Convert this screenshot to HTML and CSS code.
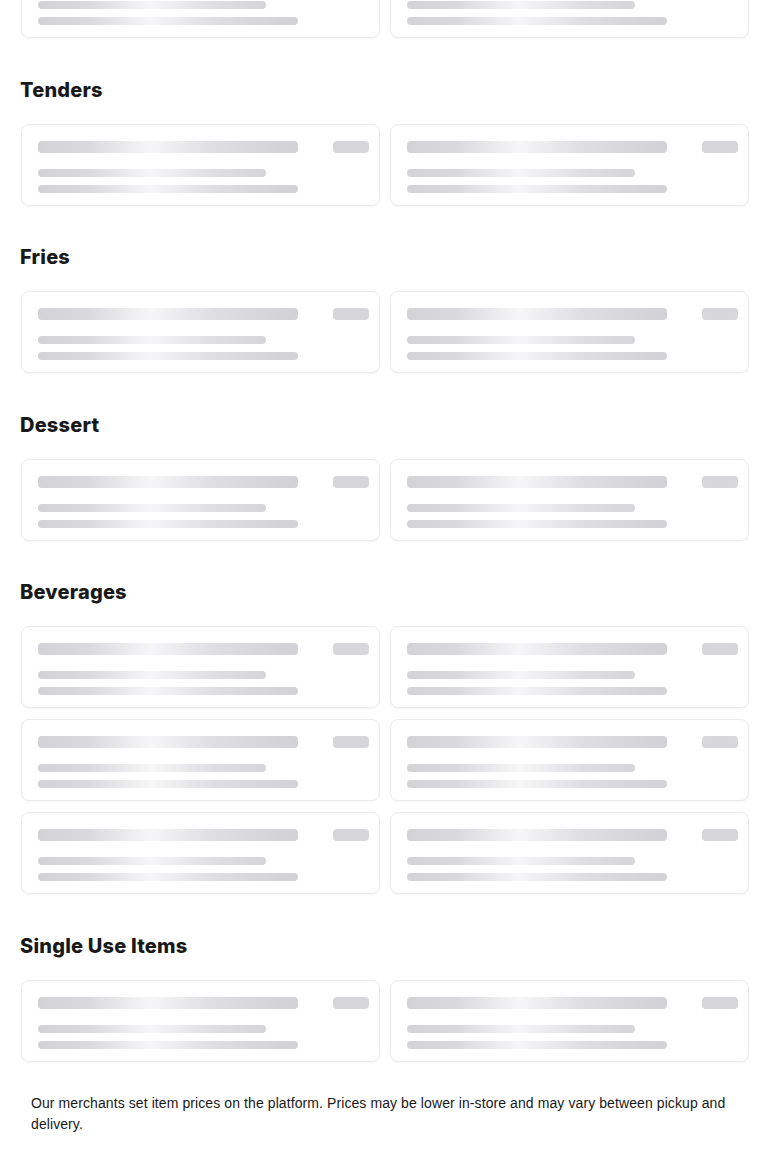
FILE: index.html
```html
<!DOCTYPE html>
<html lang="en">
<head>
<meta charset="utf-8">
<title>Menu</title>
<link rel="stylesheet" href="styles.css">
</head>
<body>
<main class="menu">
  <section class="section section-first">
    <div class="grid">
      <div class="card"><div class="row"><span class="bar bar-title"></span><span class="bar bar-price"></span></div><span class="bar bar-line1"></span><span class="bar bar-line2"></span></div>
      <div class="card"><div class="row"><span class="bar bar-title"></span><span class="bar bar-price"></span></div><span class="bar bar-line1"></span><span class="bar bar-line2"></span></div>
    </div>
  </section>

  <section class="section">
    <h2 class="heading">Tenders</h2>
    <div class="grid">
      <div class="card"><div class="row"><span class="bar bar-title"></span><span class="bar bar-price"></span></div><span class="bar bar-line1"></span><span class="bar bar-line2"></span></div>
      <div class="card"><div class="row"><span class="bar bar-title"></span><span class="bar bar-price"></span></div><span class="bar bar-line1"></span><span class="bar bar-line2"></span></div>
    </div>
  </section>

  <section class="section">
    <h2 class="heading">Fries</h2>
    <div class="grid">
      <div class="card"><div class="row"><span class="bar bar-title"></span><span class="bar bar-price"></span></div><span class="bar bar-line1"></span><span class="bar bar-line2"></span></div>
      <div class="card"><div class="row"><span class="bar bar-title"></span><span class="bar bar-price"></span></div><span class="bar bar-line1"></span><span class="bar bar-line2"></span></div>
    </div>
  </section>

  <section class="section">
    <h2 class="heading">Dessert</h2>
    <div class="grid">
      <div class="card"><div class="row"><span class="bar bar-title"></span><span class="bar bar-price"></span></div><span class="bar bar-line1"></span><span class="bar bar-line2"></span></div>
      <div class="card"><div class="row"><span class="bar bar-title"></span><span class="bar bar-price"></span></div><span class="bar bar-line1"></span><span class="bar bar-line2"></span></div>
    </div>
  </section>

  <section class="section">
    <h2 class="heading">Beverages</h2>
    <div class="grid">
      <div class="card"><div class="row"><span class="bar bar-title"></span><span class="bar bar-price"></span></div><span class="bar bar-line1"></span><span class="bar bar-line2"></span></div>
      <div class="card"><div class="row"><span class="bar bar-title"></span><span class="bar bar-price"></span></div><span class="bar bar-line1"></span><span class="bar bar-line2"></span></div>
      <div class="card"><div class="row"><span class="bar bar-title"></span><span class="bar bar-price"></span></div><span class="bar bar-line1"></span><span class="bar bar-line2"></span></div>
      <div class="card"><div class="row"><span class="bar bar-title"></span><span class="bar bar-price"></span></div><span class="bar bar-line1"></span><span class="bar bar-line2"></span></div>
      <div class="card"><div class="row"><span class="bar bar-title"></span><span class="bar bar-price"></span></div><span class="bar bar-line1"></span><span class="bar bar-line2"></span></div>
      <div class="card"><div class="row"><span class="bar bar-title"></span><span class="bar bar-price"></span></div><span class="bar bar-line1"></span><span class="bar bar-line2"></span></div>
    </div>
  </section>

  <section class="section">
    <h2 class="heading">Single Use Items</h2>
    <div class="grid">
      <div class="card"><div class="row"><span class="bar bar-title"></span><span class="bar bar-price"></span></div><span class="bar bar-line1"></span><span class="bar bar-line2"></span></div>
      <div class="card"><div class="row"><span class="bar bar-title"></span><span class="bar bar-price"></span></div><span class="bar bar-line1"></span><span class="bar bar-line2"></span></div>
    </div>
  </section>

  <p class="disclaimer">Our merchants set item prices on the platform. Prices may be lower in-store and may vary between pickup and delivery.</p>
</main>
</body>
</html>
```

FILE: styles.css
```css
html, body {
  margin: 0;
  padding: 0;
  background: #ffffff;
}

body {
  font-family: Inter, "Liberation Sans", Arial, sans-serif;
  color: #191919;
}

.menu {
  padding: 0 21px;
  margin-top: -44px;
}

.section {
  margin-top: 39.5px;
}

.section-first {
  margin-top: 0;
}

.heading {
  margin: 0 0 22px -1px;
  font-size: 20px;
  line-height: 24px;
  font-weight: 800;
  letter-spacing: 0.2px;
  color: #191919;
}

.grid {
  display: grid;
  grid-template-columns: 1fr 1fr;
  column-gap: 10px;
  row-gap: 11px;
}

.card {
  box-sizing: border-box;
  height: 82px;
  border: 1px solid #ebebef;
  border-radius: 8px;
  box-shadow: 0 1px 2px rgba(20, 20, 40, 0.04);
  padding: 16px 10px 12px 16px;
  display: flex;
  flex-direction: column;
  background: #ffffff;
}

.row {
  display: flex;
  justify-content: space-between;
  align-items: flex-start;
  margin-bottom: 16px;
}

.bar {
  display: block;
  border-radius: 4px;
  background-color: #d5d5da;
  background-image: linear-gradient(90deg,
    #d2d2d7 0px,
    #dadade 50px,
    #f6f6f8 112px,
    #dfdfe3 175px,
    #d3d3d8 240px,
    #d2d2d7 260px);
  background-size: 260px 100%;
  background-repeat: no-repeat;
}

.bar-title {
  width: 260px;
  height: 12px;
}

.bar-price {
  width: 36px;
  height: 12px;
  border-radius: 4px;
  background-image: none;
  background-color: #d6d6db;
}

.bar-line1 {
  width: 228px;
  height: 8px;
  margin-bottom: 8px;
}

.bar-line2 {
  width: 260px;
  height: 8px;
}

.disclaimer {
  margin: 31.5px 0 0 0;
  padding: 0 10px 24px 10px;
  font-family: "Liberation Sans", Arial, sans-serif;
  font-size: 14px;
  line-height: 21px;
  letter-spacing: 0.09px;
  color: #191919;
}
```
